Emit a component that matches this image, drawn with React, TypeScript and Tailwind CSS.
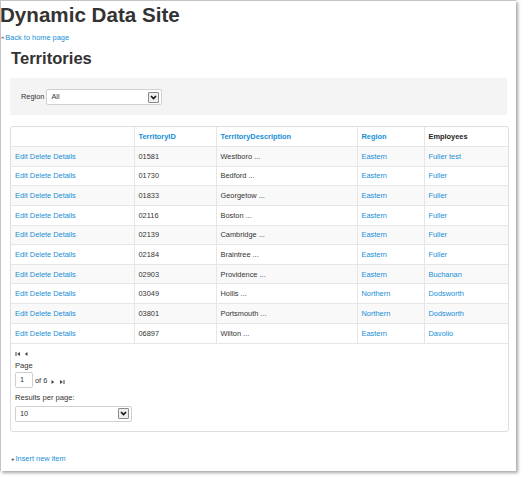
import React from 'react';

const rows = [
  { id: '01581', desc: 'Westboro ...', region: 'Eastern', emp: 'Fuller test' },
  { id: '01730', desc: 'Bedford ...', region: 'Eastern', emp: 'Fuller' },
  { id: '01833', desc: 'Georgetow ...', region: 'Eastern', emp: 'Fuller' },
  { id: '02116', desc: 'Boston ...', region: 'Eastern', emp: 'Fuller' },
  { id: '02139', desc: 'Cambridge ...', region: 'Eastern', emp: 'Fuller' },
  { id: '02184', desc: 'Braintree ...', region: 'Eastern', emp: 'Fuller' },
  { id: '02903', desc: 'Providence ...', region: 'Eastern', emp: 'Buchanan' },
  { id: '03049', desc: 'Hollis ...', region: 'Northern', emp: 'Dodsworth' },
  { id: '03801', desc: 'Portsmouth ...', region: 'Northern', emp: 'Dodsworth' },
  { id: '06897', desc: 'Wilton ...', region: 'Eastern', emp: 'Davolio' },
];

const DropButton: React.FC = () => (
  <span className="flex items-center justify-center w-[11px] h-[11px] border border-[#8a8a8a] bg-[#eeeeee] rounded-[1px]">
    <svg width="7" height="5" viewBox="0 0 7 5">
      <path d="M1 1 L3.5 3.5 L6 1" fill="none" stroke="#111" strokeWidth="1.6" />
    </svg>
  </span>
);

const Tri: React.FC<{ dir: 'l' | 'r'; bar?: boolean }> = ({ dir, bar }) => (
  <svg width={bar ? 6 : 4} height="6" viewBox={bar ? '0 0 6 6' : '0 0 4 6'}>
    {dir === 'l' ? (
      bar ? (
        <>
          <rect x="0.5" y="1" width="1" height="4" fill="#444" />
          <path d="M5 1 L2.2 3 L5 5 Z" fill="#444" />
        </>
      ) : (
        <path d="M3.5 1 L0.8 3 L3.5 5 Z" fill="#444" />
      )
    ) : bar ? (
      <>
        <path d="M1 1 L3.8 3 L1 5 Z" fill="#444" />
        <rect x="4.5" y="1" width="1" height="4" fill="#444" />
      </>
    ) : (
      <path d="M0.5 1 L3.2 3 L0.5 5 Z" fill="#444" />
    )}
  </svg>
);

export default function App() {
  return (
    <div className="w-[530px] h-[480px] bg-white font-['Liberation_Sans',Arial,sans-serif] text-[#333] text-[7.4px]">
      <div className="w-[516px] h-[471px] bg-white border-l border-t border-[#c4c4c4] shadow-[2px_2px_3px_rgba(0,0,0,0.35)] flex flex-col">
        {/* Header */}
        <h1 className="text-[20.6px] font-bold leading-[24px] pt-[2px] -ml-px">Dynamic Data Site</h1>
        <div className="mt-[6px] leading-[9px] flex items-center">
          <span className="text-[#444] text-[6px] mr-[1px]">«</span>
          <a className="text-[#168ed6]">Back to home page</a>
        </div>
        <h2 className="text-[16.6px] font-bold leading-[20px] mt-[7px] ml-[10px]">Territories</h2>

        {/* Filter panel */}
        <div className="mt-[9px] mx-[9px] h-[37px] bg-[#f4f4f4] flex items-center pl-[11px] pt-[1px]">
          <span className="mr-[2px]">Region</span>
          <div className="w-[116px] h-[16px] bg-white border border-[#d0d0d0] rounded-[2px] flex items-center justify-between pl-[4px] pr-[2px]">
            <span>All</span>
            <DropButton />
          </div>
        </div>

        {/* Grid */}
        <div className="mt-[11px] mx-[9px] w-[499px] h-[306px] border border-[#dedede] rounded-[3px] flex flex-col">
          <table className="w-full border-collapse table-fixed">
            <colgroup>
              <col className="w-[123px]" />
              <col className="w-[82px]" />
              <col className="w-[141px]" />
              <col className="w-[67px]" />
              <col />
            </colgroup>
            <thead>
              <tr className="h-[19.5px] font-bold">
                <th className="text-left font-bold pl-[4px]"></th>
                <th className="text-left font-bold pl-[4px] border-l border-[#e6e6e6] text-[#168ed6]">TerritoryID</th>
                <th className="text-left font-bold pl-[4px] border-l border-[#e6e6e6] text-[#168ed6]">TerritoryDescription</th>
                <th className="text-left font-bold pl-[4px] border-l border-[#e6e6e6] text-[#168ed6]">Region</th>
                <th className="text-left font-bold pl-[4px] border-l border-[#e6e6e6] text-[#222]">Employees</th>
              </tr>
            </thead>
            <tbody>
              {rows.map((r, i) => (
                <tr key={r.id} className={`h-[19.65px] border-t border-[#e6e6e6] ${i % 2 === 0 ? 'bg-[#f9f9f9]' : 'bg-white'}`}>
                  <td className="pl-[4px] text-[#168ed6]">Edit Delete Details</td>
                  <td className="pl-[4px] border-l border-[#e6e6e6]">{r.id}</td>
                  <td className="pl-[4px] border-l border-[#e6e6e6]">{r.desc}</td>
                  <td className="pl-[4px] border-l border-[#e6e6e6] text-[#168ed6]">{r.region}</td>
                  <td className="pl-[4px] border-l border-[#e6e6e6] text-[#168ed6]">{r.emp}</td>
                </tr>
              ))}
            </tbody>
          </table>

          {/* Pager */}
          <div className="border-t border-[#e6e6e6] pl-[4px] pt-[7px]">
            <div className="flex items-center gap-[3px] h-[7px]">
              <Tri dir="l" bar />
              <Tri dir="l" />
            </div>
            <div className="mt-[3px] leading-[10px] text-[7.6px]">Page</div>
            <div className="mt-[1px] flex items-end">
              <div className="w-[18px] h-[16px] border border-[#cfcfcf] rounded-[2px] bg-white flex items-center pl-[4px]">1</div>
              <span className="ml-[2px] mb-[2px]">of 6</span>
              <span className="ml-[4px] mb-[3px] flex items-center gap-[4px]">
                <Tri dir="r" />
                <Tri dir="r" bar />
              </span>
            </div>
            <div className="mt-[5px] leading-[10px] text-[7.6px]">Results per page:</div>
            <div className="mt-[3px] w-[117px] h-[16px] bg-white border border-[#d0d0d0] rounded-[2px] flex items-center justify-between pl-[4px] pr-[2px]">
              <span>10</span>
              <DropButton />
            </div>
          </div>
        </div>

        {/* Footer link */}
        <div className="mt-[22px] ml-[10px] flex items-center leading-[10px]">
          <span className="text-[#333] text-[6px] font-bold mr-[1px]">+</span>
          <a className="text-[#168ed6]">Insert new item</a>
        </div>
      </div>
    </div>
  );
}
